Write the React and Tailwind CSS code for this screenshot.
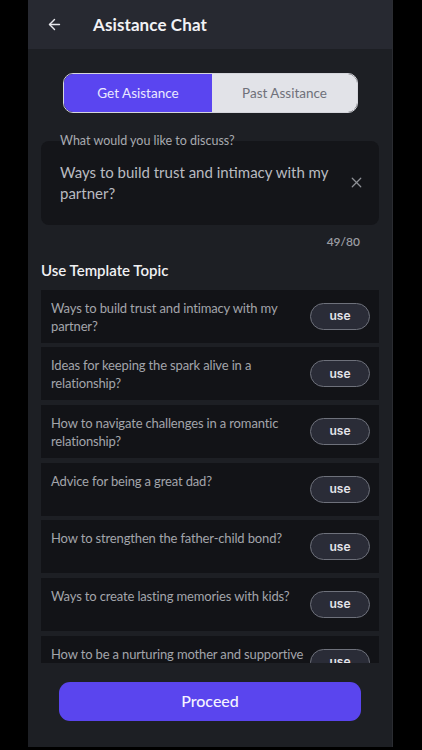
import { ArrowLeft, X } from 'lucide-react';

const topics = [
  'Ways to build trust and intimacy with my partner?',
  'Ideas for keeping the spark alive in a relationship?',
  'How to navigate challenges in a romantic relationship?',
  'Advice for being a great dad?',
  'How to strengthen the father-child bond?',
  'Ways to create lasting memories with kids?',
  'How to be a nurturing mother and supportive partner?',
];

function TopicCard({ text }) {
  return (
    <div className="flex items-center justify-between gap-[2px] h-[53px] shrink-0 bg-[#121317] pl-[10px] pr-[9px]">
      <p className="self-start flex-1 min-w-0 pt-[9px] text-[13px] tracking-[-0.15px] leading-[18.3px] text-[#a3a5ab]">{text}</p>
      <button className="w-[60px] h-[27px] shrink-0 rounded-full border-[1.5px] border-[#6e717b] bg-[#2a2c37] text-[12px] font-semibold text-[#e4e4ea] font-['Inter',sans-serif]">
        use
      </button>
    </div>
  );
}

export default function App() {
  return (
    <div className="w-[422px] h-[750px] bg-black font-['Lato',sans-serif] overflow-hidden">
      <div className="ml-[28px] w-[365px] h-[747px] bg-[#1d1f24] border-r border-[#2a2c31] flex flex-col">
        {/* Header */}
        <header className="h-[49px] shrink-0 bg-[#272931] flex items-center pl-[18px]">
          <ArrowLeft size={17} strokeWidth={2} className="text-[#e8e8ec]" />
          <h1 className="ml-[30px] text-[17px] font-bold text-[#f2f2f5] tracking-[0.1px]">Asistance Chat</h1>
        </header>

        {/* Toggle */}
        <div className="mt-[24px] ml-[35px] w-[295px] h-[40px] flex rounded-[10px] border-[1.5px] border-[#d5d6dc] overflow-hidden">
          <div className="w-[148px] bg-[#5a45f0] flex items-center justify-center text-[13.5px] text-[#ebe9ff]">Get Asistance</div>
          <div className="flex-1 bg-[#e2e3e8] flex items-center justify-center text-[13.5px] text-[#6f717a]">Past Assitance</div>
        </div>

        {/* Input */}
        <div className="relative mt-[28px] mx-[13px] h-[84px] bg-[#141519] rounded-[8px] flex items-start pl-[19px] pr-[14px] pt-[21px]">
          <span className="absolute left-[19px] top-0 -translate-y-1/2 text-[12.5px] text-[#a8aab0]">What would you like to discuss?</span>
          <p className="w-[280px] text-[15px] leading-[21px] text-[#b9bbc0]">Ways to build trust and intimacy with my partner?</p>
          <X size={17} strokeWidth={1.7} className="ml-auto mt-[12px] text-[#8e9096]" />
        </div>

        <div className="mt-[8px] pr-[32px] text-right text-[12px] font-semibold text-[#9a9ca2]">49/80</div>

        <h2 className="mt-[8px] ml-[13px] text-[15px] font-semibold text-[#f0f0f3]">Use Template Topic</h2>

        {/* Template list */}
        <div className="mt-[8px] mx-[13px] h-[373px] shrink-0 overflow-hidden flex flex-col gap-[4.7px]">
          {topics.map((t) => (
            <TopicCard key={t} text={t} />
          ))}
        </div>

        {/* Proceed */}
        <div className="flex-1 flex items-start pt-[19px]">
          <button className="ml-[31px] w-[302px] h-[39px] rounded-[11px] bg-[#5a45ee] text-[16px] font-medium text-[#f4f3ff]">
            Proceed
          </button>
        </div>
      </div>
    </div>
  );
}
